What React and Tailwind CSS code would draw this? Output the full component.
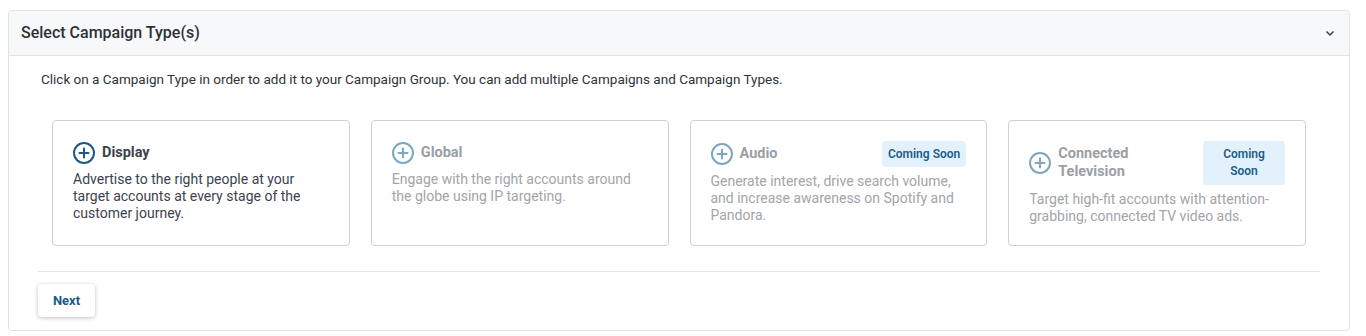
import React from "react";

const types = [
  {
    title: "Display",
    desc: "Advertise to the right people at your target accounts at every stage of the customer journey.",
    active: true,
  },
  {
    title: "Global",
    desc: "Engage with the right accounts around the globe using IP targeting.",
  },
  {
    title: "Audio",
    desc: "Generate interest, drive search volume, and increase awareness on Spotify and Pandora.",
    soon: true,
  },
  {
    title: "Connected Television",
    desc: "Target high-fit accounts with attention-grabbing, connected TV video ads.",
    soon: true,
    narrow: true,
  },
];

function PlusCircle({ active }) {
  return (
    <svg
      width="22"
      height="22"
      viewBox="0 0 22 22"
      fill="none"
      stroke={active ? "#1b5a87" : "#7ea5c1"}
      strokeWidth="2"
      strokeLinecap="round"
      className="shrink-0"
    >
      <circle cx="11" cy="11" r="10" />
      <path d="M11 6.5v9M6.5 11h9" />
    </svg>
  );
}

function TypeCard({ item }) {
  return (
    <div className="h-[126px] rounded border border-[#cdd0d4] bg-white px-5 pt-5 cursor-pointer">
      <div className="flex items-center justify-between gap-3 min-h-[24px]">
        <div className="flex items-center gap-[7px]">
          <PlusCircle active={item.active} />
          <span
            className={
              "text-[14.5px] font-bold leading-[18px] " +
              (item.active ? "text-[#3a434d]" : "text-[#9b9fa4]")
            }
          >
            {item.title}
          </span>
        </div>
        {item.soon && (
          <span
            className={
              "shrink-0 rounded-sm bg-[#e3f1fc] px-[6px] text-center text-[12px] font-semibold text-[#1d5d89] " +
              (item.narrow ? "w-[82px] py-[5px] leading-[17px]" : "py-[4px] leading-[18px]")
            }
          >
            {item.narrow ? (
              <>
                Coming
                <br />
                Soon
              </>
            ) : (
              "Coming Soon"
            )}
          </span>
        )}
      </div>
      <p
        className={
          "mt-[6px] text-[14px] leading-[17px] " +
          (item.active ? "text-[#3a434d]" : "text-[#a2a5a9]")
        }
      >
        {item.desc}
      </p>
    </div>
  );
}

export default function App() {
  return (
    <div className="bg-white pt-[10px] pl-2 pr-4 pb-[5px] font-['Roboto',sans-serif]">
      <div className="rounded border border-[#dfe2e6]">
        {/* Header */}
        <div className="flex h-[45px] items-center justify-between border-b border-[#dfe2e6] bg-[#f7f8fa] pl-[12px] pr-[14px] rounded-t">
          <h2 className="text-[16px] font-medium text-[#2d3136]">Select Campaign Type(s)</h2>
          <svg width="10" height="7" viewBox="0 0 10 7" fill="none" stroke="#3b3f44" strokeWidth="1.5">
            <path d="M1.5 1.5 5 5l3.5-3.5" />
          </svg>
        </div>

        {/* Body */}
        <div className="px-[29px] pt-[15px] pb-[13px]">
          <p className="pl-[3px] text-[13.5px] leading-[16px] text-[#2f3338]">
            Click on a Campaign Type in order to add it to your Campaign Group. You can add multiple Campaigns and Campaign Types.
          </p>

          <div className="mt-[33px] grid grid-cols-4 gap-[21px] px-[14px]">
            {types.map((t) => (
              <TypeCard key={t.title} item={t} />
            ))}
          </div>

          <div className="mt-[25px] border-t border-[#e1e4e8]" />

          <button className="mt-[12px] h-[33px] w-[57px] rounded bg-white text-[13px] font-bold text-[#1b5a87] shadow-[0_1px_4px_rgba(0,0,0,0.25)]">
            Next
          </button>
        </div>
      </div>
    </div>
  );
}
